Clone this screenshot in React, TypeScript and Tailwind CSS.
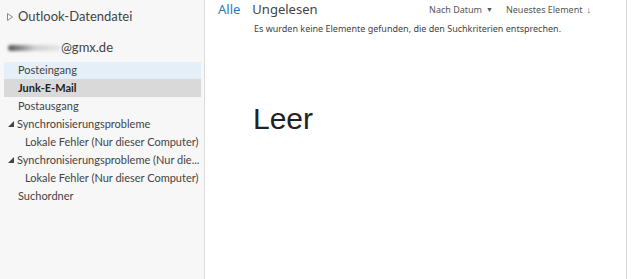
import React from "react";

const font = { fontFamily: '"Noto Sans", "Open Sans", sans-serif' };
const side = { fontFamily: 'Lato, "Noto Sans", sans-serif' };

function Tri({ open }: { open?: boolean }) {
  if (open) {
    return (
      <svg width="6" height="6" viewBox="0 0 6 6" className="mr-[3px] shrink-0">
        <polygon points="6,0 6,6 0,6" fill="#444" />
      </svg>
    );
  }
  return (
    <svg width="6" height="8" viewBox="0 0 6 8" className="mr-[5px] shrink-0">
      <polygon points="0.5,0.5 5.5,4 0.5,7.5" fill="none" stroke="#888" strokeWidth="1" />
    </svg>
  );
}

export default function App() {
  return (
    <div className="w-[640px] h-[279px] flex bg-white overflow-hidden text-[#333]" style={font}>
      <div className="w-[205px] h-full bg-[#f7f7f7] border-r border-[#dcdcdc] flex flex-col whitespace-nowrap" style={side}>
        <div className="h-[34px] flex items-center pl-[7px] text-[13px] text-[#444]">
          <Tri />
          <span>Outlook-Datendatei</span>
        </div>
        <div className="h-[28px] flex items-center pl-[8px] text-[13px] text-[#444]">
          <div className="w-[53px] h-[6px] rounded-full bg-gradient-to-r from-[#555] via-[#cfcfcf] to-[#e8e8e8] blur-[1.5px]" />
          <span>@gmx.de</span>
        </div>
        <div className="ml-[4px] mr-[3px] h-[17px] bg-[#e4eff8] flex items-center pl-[14px] text-[11px] text-[#444]">
          Posteingang
        </div>
        <div className="ml-[4px] mr-[3px] h-[18px] bg-[#d9d9d9] flex items-center pl-[14px] text-[11px] font-bold text-[#222]">
          Junk-E-Mail
        </div>
        <div className="h-[18px] flex items-center pl-[18px] text-[11px] text-[#444]">Postausgang</div>
        <div className="h-[18px] flex items-center pl-[8px] text-[11px] text-[#444]">
          <Tri open />
          <span>Synchronisierungsprobleme</span>
        </div>
        <div className="h-[18px] flex items-center pl-[25px] text-[11px] text-[#444]">
          Lokale Fehler (Nur dieser Computer)
        </div>
        <div className="h-[18px] flex items-center pl-[8px] text-[11px] text-[#444]">
          <Tri open />
          <span>Synchronisierungsprobleme (Nur die...</span>
        </div>
        <div className="h-[18px] flex items-center pl-[25px] text-[11px] text-[#444]">
          Lokale Fehler (Nur dieser Computer)
        </div>
        <div className="h-[18px] flex items-center pl-[18px] text-[11px] text-[#444]">Suchordner</div>
      </div>
      <div className="w-[422px] h-full border-r border-[#d6d6d6] flex flex-col">
        <div className="h-[20px] flex items-center pl-[13px] pr-[35px]">
          <span className="text-[13px] text-[#2a7ac0]">Alle</span>
          <span className="text-[13px] text-[#444] ml-[12px]">Ungelesen</span>
          <div className="flex-1" />
          <span className="text-[9px] text-[#555]">Nach Datum</span>
          <span className="text-[7px] text-[#555] ml-[4px]">▼</span>
          <span className="text-[9px] text-[#555] ml-[13px]">Neuestes Element</span>
          <span className="text-[9px] text-[#555] ml-[4px]">↓</span>
        </div>
        <div className="h-[18px] flex items-center pl-[49px] text-[9px] text-[#444]">
          Es wurden keine Elemente gefunden, die den Suchkriterien entsprechen.
        </div>
        <div
          className="mt-[66px] pl-[48px] text-[30px] text-[#222] leading-none"
          style={{ fontFamily: '"Liberation Sans", Arial, sans-serif' }}
        >
          Leer
        </div>
      </div>
      <div className="flex-1 bg-white" />
    </div>
  );
}
